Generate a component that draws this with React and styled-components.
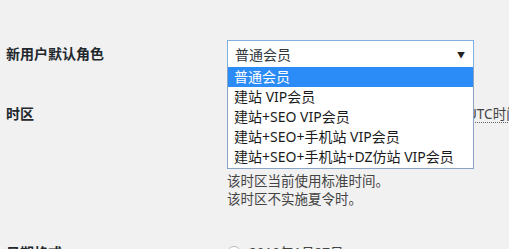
import styled, { createGlobalStyle } from "styled-components";

const GlobalStyle = createGlobalStyle`
  body {
    margin: 0;
    background: #f1f1f1;
    font-family: "Noto Sans", "Noto Sans CJK SC", sans-serif;
    color: #444;
  }
`;

const Page = styled.div`
  width: 509px;
  height: 249px;
  overflow: hidden;
  padding-left: 6px;
  box-sizing: border-box;
`;

const Row = styled.div`
  display: flex;
  align-items: ${(p) => (p.$top ? "flex-start" : "center")};
  margin-top: ${(p) => p.$gap}px;
`;

const Label = styled.div`
  width: 221px;
  flex-shrink: 0;
  font-size: 14px;
  font-weight: 700;
  color: #23282d;
  line-height: ${(p) => p.$lh || 28}px;
`;

const Field = styled.div`
  position: relative;
  display: flex;
  flex-direction: column;
`;

const Line = styled.div`
  display: flex;
  align-items: center;
  gap: 2px;
`;

const Select = styled.div`
  width: ${(p) => p.$w}px;
  height: 28px;
  box-sizing: border-box;
  border: 1px solid ${(p) => (p.$focus ? "#7fb0e0" : "#ddd")};
  background: #fff;
  display: flex;
  align-items: center;
  justify-content: space-between;
  padding: 0 8px 0 7px;
  font-size: 14px;
  color: #32373c;
`;

const Arrow = styled.span`
  font-size: 8px;
  color: #222;
`;

const Menu = styled.ul`
  position: absolute;
  top: 27px;
  left: 0;
  width: 247px;
  box-sizing: border-box;
  margin: 0;
  padding: 0 0 1px;
  list-style: none;
  background: #fff;
  border: 1px solid #8aa4c8;
  border-top: none;
  z-index: 2;
`;

const Option = styled.li`
  height: 20px;
  line-height: 20px;
  padding-left: 6px;
  font-size: 14px;
  color: ${(p) => (p.$active ? "#fff" : "#1a1a1a")};
  background: ${(p) => (p.$active ? "#2b8cf7" : "transparent")};
  white-space: nowrap;
`;

const Abbr = styled.span`
  font-size: 13.5px;
  color: #444;
  border-bottom: 1px dotted #666;
  line-height: 16px;
  white-space: nowrap;
`;

const Desc = styled.p`
  margin: 0;
  font-size: 13.5px;
  line-height: 18px;
  color: #444;
`;

const Radio = styled.span`
  width: 14px;
  height: 14px;
  border-radius: 50%;
  border: 1px solid #b4b9be;
  background: #fff;
  box-sizing: border-box;
  display: inline-block;
  margin-right: 8px;
`;

const Choice = styled.div`
  display: flex;
  align-items: center;
  font-size: 13.5px;
  line-height: 20px;
  color: #444;
`;

const roles = [
  "普通会员",
  "建站 VIP会员",
  "建站+SEO VIP会员",
  "建站+SEO+手机站 VIP会员",
  "建站+SEO+手机站+DZ仿站 VIP会员",
];

export default function App() {
  return (
    <Page>
      <GlobalStyle />
      <Row $gap={40}>
        <Label>新用户默认角色</Label>
        <Field>
          <Select $w={247} $focus>
            <span>普通会员</span>
            <Arrow>▼</Arrow>
          </Select>
          <Menu>
            {roles.map((r, i) => (
              <Option key={r} $active={i === 0}>
                {r}
              </Option>
            ))}
          </Menu>
        </Field>
      </Row>
      <Row $gap={32} $top>
        <Label>时区</Label>
        <Field>
          <Line>
            <Select $w={238}>
              <span>上海</span>
              <Arrow>▼</Arrow>
            </Select>
            <Abbr>UTC时间</Abbr>
          </Line>
          <Desc style={{ marginTop: 44 }}>该时区当前使用标准时间。</Desc>
          <Desc>该时区不实施夏令时。</Desc>
        </Field>
      </Row>
      <Row $gap={35}>
        <Label $lh={20}>日期格式</Label>
        <Choice>
          <Radio />
          2019年1月27日
        </Choice>
      </Row>
    </Page>
  );
}
